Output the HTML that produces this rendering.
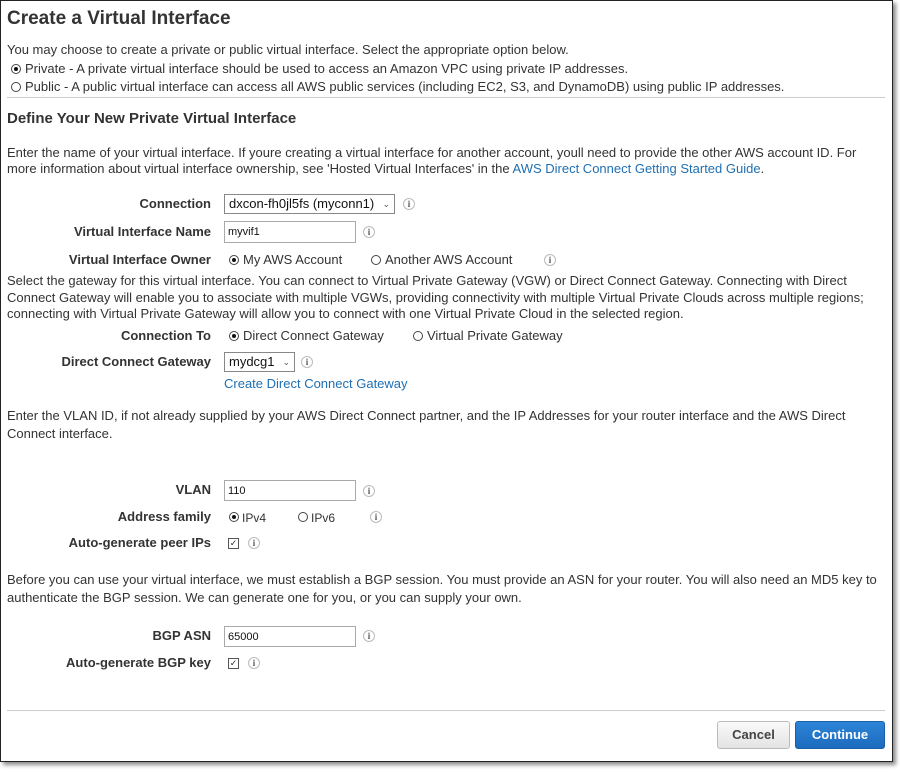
<!DOCTYPE html>
<html><head><style>
body{margin:0;width:900px;height:772px;background:#fff;font-family:"Liberation Sans",Arial,sans-serif;font-size:13px;color:#333;position:relative;overflow:hidden}
#f{position:absolute;left:0;top:0;width:891px;height:760px;border:1px solid #222;box-shadow:3px 3px 4px rgba(0,0,0,.45);background:#fff}
.a{position:absolute;white-space:nowrap;line-height:16px}
.l{position:absolute;right:689px;font-weight:bold;white-space:nowrap;line-height:16px;color:#333}
.r{position:absolute;width:10px;height:10px;border:1px solid #444;border-radius:50%;box-sizing:border-box}
.r.on::after{content:"";position:absolute;left:2px;top:2px;width:4px;height:4px;border-radius:50%;background:#111}
.i{position:absolute;width:12px;height:12px;border-radius:50%;border:1px solid #bbb;box-sizing:border-box;font-size:9px;line-height:10px;text-align:center;color:#555;font-weight:bold;font-family:"Liberation Serif",serif}
.in{position:absolute;border:1px solid #aaa;box-sizing:border-box;height:22px;padding-left:3px;line-height:20px;font-size:11px;color:#111}
.sel{position:absolute;border:1px solid #888;box-sizing:border-box;height:20px;padding-left:4px;line-height:18px;font-size:13px;color:#111}
.sel span{position:absolute;right:4px;top:0;font-size:9px;color:#555}
.cb{position:absolute;width:11px;height:11px;border:1px solid #555;box-sizing:border-box;font-size:9px;line-height:9px;text-align:center;color:#333}
.hr{position:absolute;left:7px;width:878px;height:1px;background:#ccc}
a{color:#1f6fb2;text-decoration:none}
</style></head><body>
<div id="f"></div>
<div class="a" style="left:7px;top:8px;font-size:19px;font-weight:bold;line-height:22px;color:#333">Create a Virtual Interface</div>
<div class="a" style="left:7px;top:42px">You may choose to create a private or public virtual interface. Select the appropriate option below.</div>
<div class="r on" style="left:11px;top:64px"></div><div class="a" style="left:25px;top:61px">Private - A private virtual interface should be used to access an Amazon VPC using private IP addresses.</div>
<div class="r" style="left:11px;top:82px"></div><div class="a" style="left:25px;top:79px">Public - A public virtual interface can access all AWS public services (including EC2, S3, and DynamoDB) using public IP addresses.</div>
<div class="hr" style="top:97px"></div>
<div class="a" style="left:7px;top:110px;font-size:15px;font-weight:bold;line-height:18px">Define Your New Private Virtual Interface</div>
<div class="a" style="left:7px;top:145px">Enter the name of your virtual interface. If youre creating a virtual interface for another account, youll need to provide the other AWS account ID. For</div>
<div class="a" style="left:7px;top:161px">more information about virtual interface ownership, see 'Hosted Virtual Interfaces' in the <a>AWS Direct Connect Getting Started Guide</a>.</div>

<div class="l" style="top:196px">Connection</div>
<div class="sel" style="left:224px;top:194px;width:171px">dxcon-fh0jl5fs (myconn1)<span>&#8964;</span></div>
<div class="i" style="left:403px;top:198px">i</div>

<div class="l" style="top:224px">Virtual Interface Name</div>
<div class="in" style="left:224px;top:221px;width:132px">myvif1</div>
<div class="i" style="left:363px;top:226px">i</div>

<div class="l" style="top:252px">Virtual Interface Owner</div>
<div class="r on" style="left:229px;top:255px"></div><div class="a" style="left:243px;top:252px">My AWS Account</div>
<div class="r" style="left:371px;top:255px"></div><div class="a" style="left:385px;top:252px">Another AWS Account</div>
<div class="i" style="left:544px;top:254px">i</div>

<div class="a" style="left:7px;top:273px">Select the gateway for this virtual interface. You can connect to Virtual Private Gateway (VGW) or Direct Connect Gateway. Connecting with Direct</div>
<div class="a" style="left:7px;top:290px">Connect Gateway will enable you to associate with multiple VGWs, providing connectivity with multiple Virtual Private Clouds across multiple regions;</div>
<div class="a" style="left:7px;top:306px">connecting with Virtual Private Gateway will allow you to connect with one Virtual Private Cloud in the selected region.</div>

<div class="l" style="top:328px">Connection To</div>
<div class="r on" style="left:229px;top:331px"></div><div class="a" style="left:243px;top:328px">Direct Connect Gateway</div>
<div class="r" style="left:413px;top:331px"></div><div class="a" style="left:427px;top:328px">Virtual Private Gateway</div>

<div class="l" style="top:354px">Direct Connect Gateway</div>
<div class="sel" style="left:224px;top:352px;width:71px">mydcg1<span>&#8964;</span></div>
<div class="i" style="left:301px;top:356px">i</div>
<div class="a" style="left:224px;top:376px"><a>Create Direct Connect Gateway</a></div>

<div class="a" style="left:7px;top:408px">Enter the VLAN ID, if not already supplied by your AWS Direct Connect partner, and the IP Addresses for your router interface and the AWS Direct</div>
<div class="a" style="left:7px;top:426px">Connect interface.</div>

<div class="l" style="top:482px">VLAN</div>
<div class="in" style="left:224px;top:480px;width:132px;height:21px">110</div>
<div class="i" style="left:363px;top:485px">i</div>

<div class="l" style="top:509px">Address family</div>
<div class="r on" style="left:229px;top:512px"></div><div class="a" style="left:242px;top:510px;font-size:12px">IPv4</div>
<div class="r" style="left:298px;top:512px"></div><div class="a" style="left:311px;top:510px;font-size:12px">IPv6</div>
<div class="i" style="left:370px;top:511px">i</div>

<div class="l" style="top:535px">Auto-generate peer IPs</div>
<div class="cb" style="left:228px;top:538px">&#10003;</div>
<div class="i" style="left:248px;top:537px">i</div>

<div class="a" style="left:7px;top:572px">Before you can use your virtual interface, we must establish a BGP session. You must provide an ASN for your router. You will also need an MD5 key to</div>
<div class="a" style="left:7px;top:590px">authenticate the BGP session. We can generate one for you, or you can supply your own.</div>

<div class="l" style="top:628px">BGP ASN</div>
<div class="in" style="left:224px;top:626px;width:132px;height:21px">65000</div>
<div class="i" style="left:363px;top:630px">i</div>

<div class="l" style="top:655px">Auto-generate BGP key</div>
<div class="cb" style="left:228px;top:658px">&#10003;</div>
<div class="i" style="left:248px;top:657px">i</div>

<div class="hr" style="top:710px"></div>
<div style="position:absolute;left:717px;top:721px;width:73px;height:28px;box-sizing:border-box;border:1px solid #bbb;border-radius:3px;background:linear-gradient(#fafafa,#e3e3e3);font-weight:bold;font-size:13px;line-height:26px;text-align:center;color:#444">Cancel</div>
<div style="position:absolute;left:795px;top:721px;width:90px;height:28px;box-sizing:border-box;border:1px solid #1a5fa8;border-radius:3px;background:linear-gradient(#2d85d6,#1c6bbf);font-weight:bold;font-size:13px;line-height:26px;text-align:center;color:#fff">Continue</div>
</body></html>
